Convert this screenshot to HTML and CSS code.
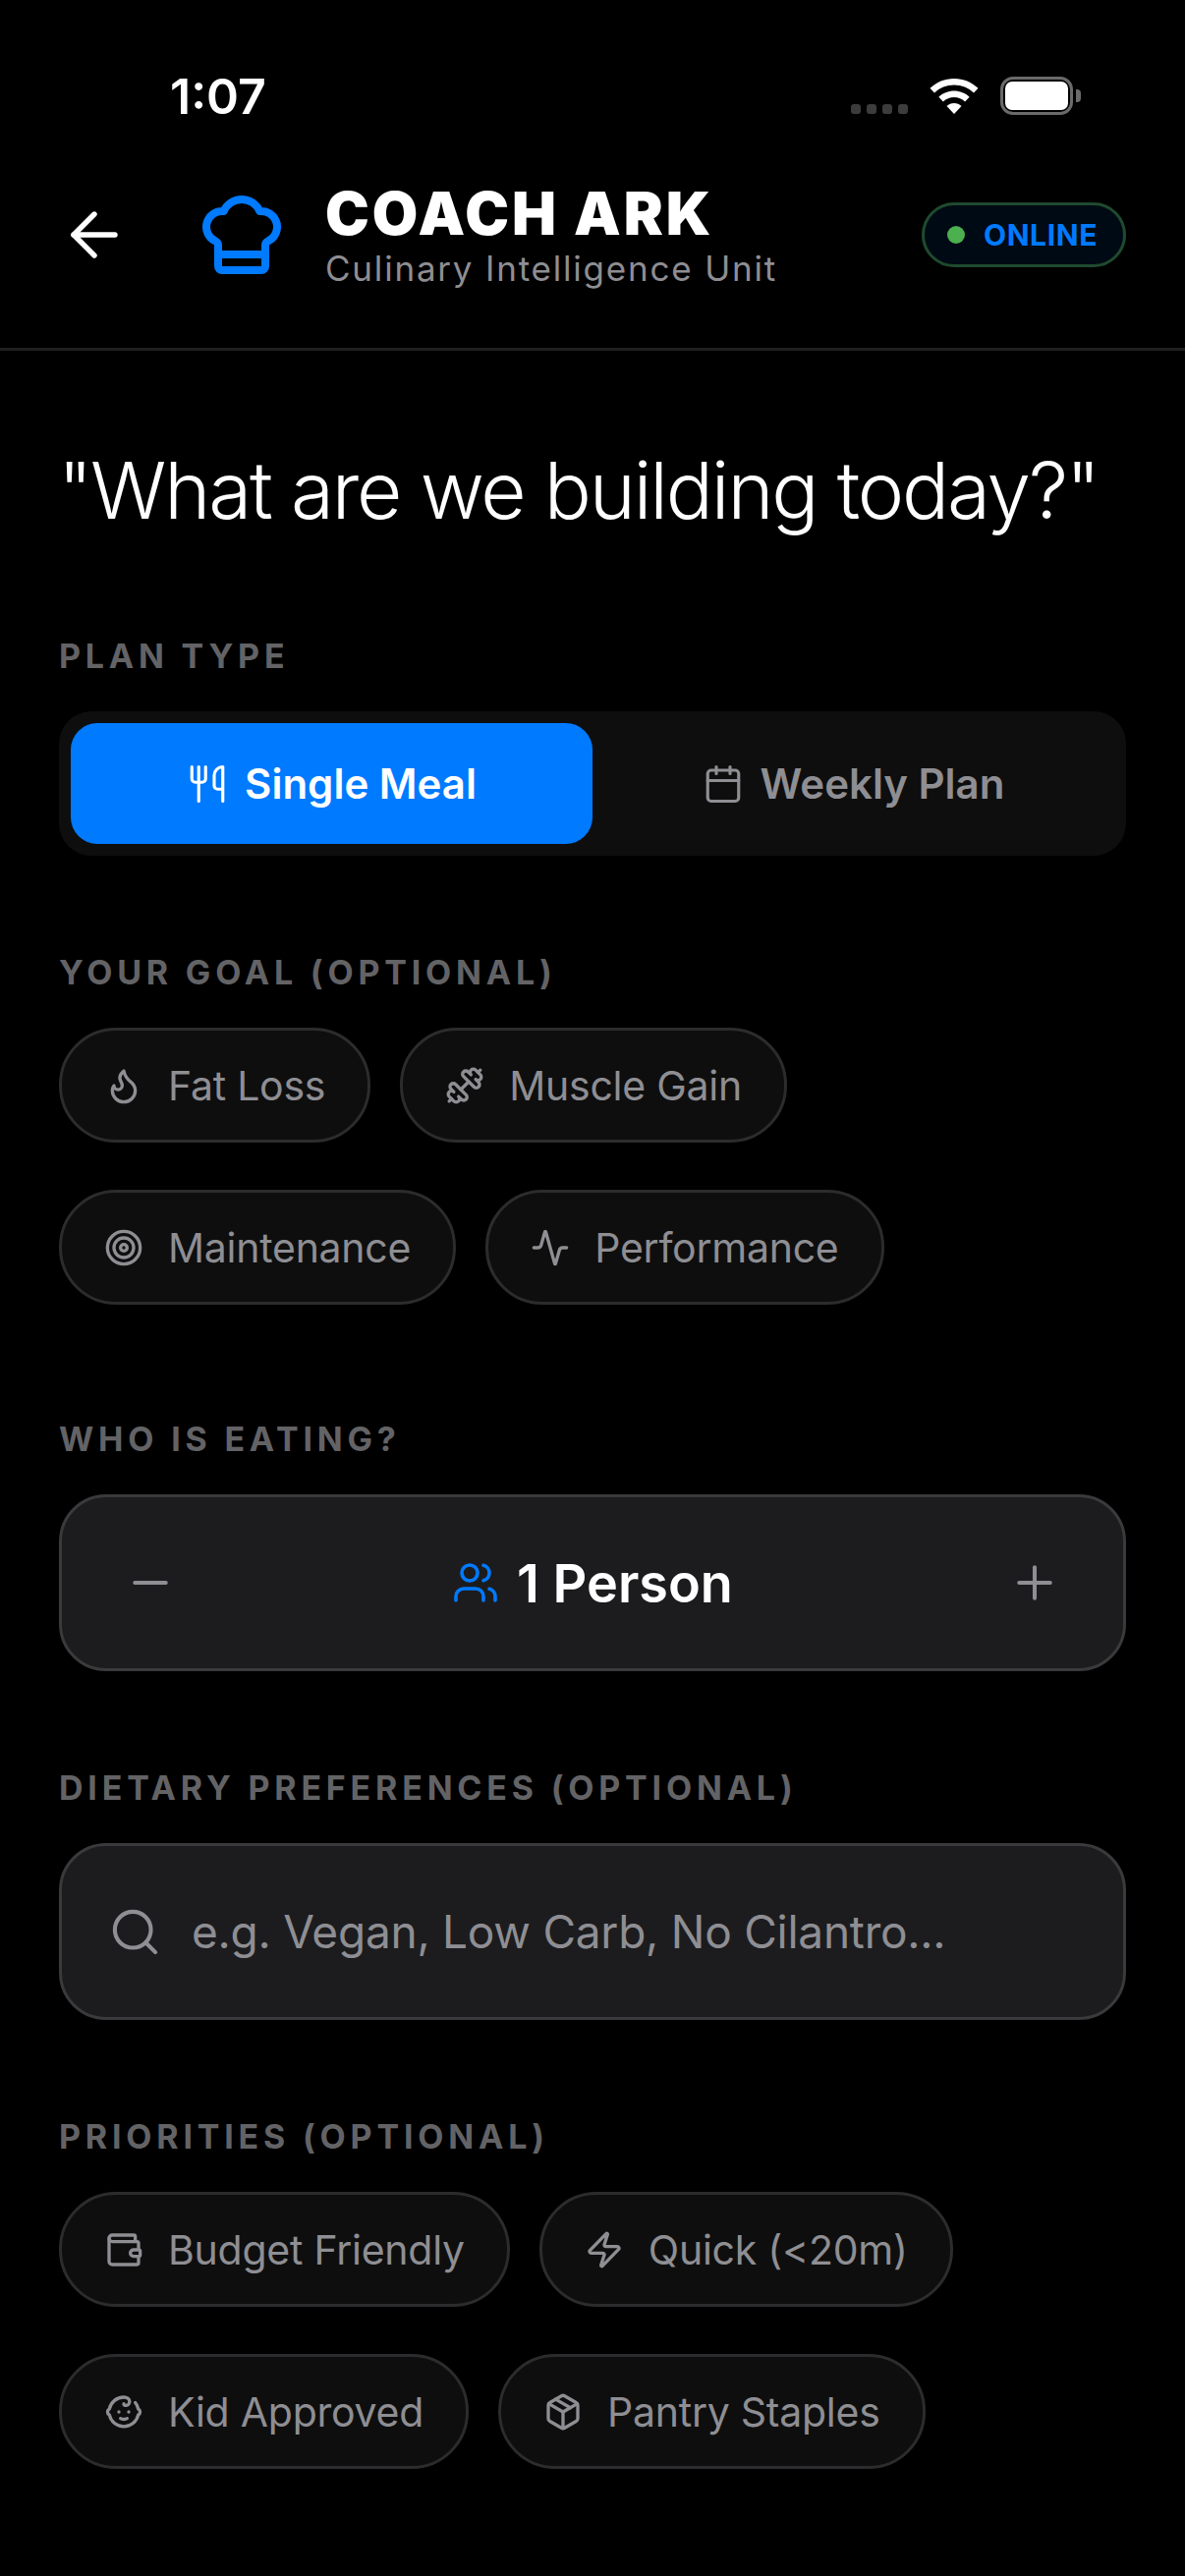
FILE: index.html
```html
<!DOCTYPE html>
<html lang="en">
<head>
    <meta charset="UTF-8">
    <meta name="viewport" content="width=device-width, initial-scale=1.0">
    <title>Coach Ark</title>
    <link rel="stylesheet" href="styles.css">
</head>
<body>
    <div class="status-bar">
        <span class="time">1:07</span>
        <div class="status-icons">
            <div class="signal"><i></i><i></i><i></i><i></i></div>
            <svg class="wifi" viewBox="0 0 50 36"><path d="M25 0C15.500 0 7 3.700 0.500 9.800L5 14.500C10.300 9.600 17.300 6.600 25 6.600s14.700 3 20 7.900l4.500-4.700C43 3.700 34.500 0 25 0z"/><path d="M25 12.500c-6 0-11.500 2.300-15.600 6.200l4.500 4.700c2.900-2.700 6.800-4.400 11.100-4.400s8.200 1.700 11.100 4.400l4.500-4.700c-4.100-3.900-9.600-6.200-15.600-6.200z"/><path d="M25 25c-2.900 0-5.500 1.100-7.500 2.900L25 36l7.500-8.100C30.500 26.100 27.900 25 25 25z"/></svg>
            <div class="battery"><div class="battery-fill"></div></div>
        </div>
    </div>

    <header class="top-bar">
        <svg class="back" viewBox="0 0 24 24"><path d="m12 19-7-7 7-7"/><path d="M19 12H5"/></svg>
        <svg class="hat" viewBox="0 0 24 24"><path d="M17 21a1 1 0 0 0 1-1v-5.350c0-.457.316-.844.727-1.041a4 4 0 0 0-2.134-7.589 5 5 0 0 0-9.186 0 4 4 0 0 0-2.134 7.588c.411.198.727.585.727 1.041V20a1 1 0 0 0 1 1Z"/><path d="M6 17h12"/></svg>
        <div class="brand">
            <h1>COACH ARK</h1>
            <p>Culinary Intelligence Unit</p>
        </div>
        <div class="online"><span class="dot"></span>ONLINE</div>
    </header>

    <main class="content">
        <h2 class="question">"What are we building today?"</h2>

        <section class="group">
            <div class="label">PLAN TYPE</div>
            <div class="tabs">
                <div class="tab active">
                    <svg class="tab-icon" viewBox="0 0 24 24"><path d="M3 2v7c0 1.100.9 2 2 2h4a2 2 0 0 0 2-2V2"/><path d="M7 2v20"/><path d="M21 15V2a5 5 0 0 0-5 5v6c0 1.100.9 2 2 2h3Zm0 0v7"/></svg>
                    Single Meal
                </div>
                <div class="tab">
                    <svg class="tab-icon" viewBox="0 0 24 24"><path d="M8 2v4"/><path d="M16 2v4"/><rect x="3" y="4" width="18" height="18" rx="2"/><path d="M3 10h18"/></svg>
                    Weekly Plan
                </div>
            </div>
        </section>

        <section class="group">
            <div class="label">YOUR GOAL (OPTIONAL)</div>
            <div class="chips">
                <div class="chip">
                    <svg viewBox="0 0 24 24"><path d="M8.500 14.500A2.500 2.500 0 0 0 11 12c0-1.380-.5-2-1-3-1.072-2.143-.224-4.054 2-6 .5 2.500 2 4.900 4 6.500 2 1.600 3 3.500 3 5.500a7 7 0 1 1-14 0c0-1.153.433-2.294 1-3a2.500 2.500 0 0 0 2.500 2.500z"/></svg>
                    Fat Loss
                </div>
                <div class="chip">
                    <svg class="flip" viewBox="0 0 24 24"><path d="M14.400 14.400 9.600 9.600"/><path d="M18.657 21.485a2 2 0 1 1-2.829-2.828l-1.767 1.768a2 2 0 1 1-2.829-2.829l6.364-6.364a2 2 0 1 1 2.829 2.829l-1.768 1.767a2 2 0 1 1 2.828 2.829z"/><path d="m21.500 21.500-1.400-1.400"/><path d="M3.900 3.900 2.500 2.500"/><path d="M6.404 12.768a2 2 0 1 1-2.829-2.829l1.768-1.767a2 2 0 1 1-2.828-2.829l2.828-2.828a2 2 0 1 1 2.829 2.828l1.767-1.768a2 2 0 1 1 2.829 2.829z"/></svg>
                    Muscle Gain
                </div>
                <div class="chip">
                    <svg viewBox="0 0 24 24"><circle cx="12" cy="12" r="10"/><circle cx="12" cy="12" r="6"/><circle cx="12" cy="12" r="2"/></svg>
                    Maintenance
                </div>
                <div class="chip">
                    <svg viewBox="0 0 24 24"><path d="M22 12h-2.480a2 2 0 0 0-1.930 1.460l-2.350 8.360a.25.25 0 0 1-.48 0L9.240 2.180a.25.25 0 0 0-.48 0l-2.350 8.360A2 2 0 0 1 4.490 12H2"/></svg>
                    Performance
                </div>
            </div>
        </section>

        <section class="group">
            <div class="label">WHO IS EATING?</div>
            <div class="stepper">
                <svg class="step-btn" viewBox="0 0 24 24"><path d="M5 12h14"/></svg>
                <div class="count">
                    <svg viewBox="0 0 24 24"><path d="M16 21v-2a4 4 0 0 0-4-4H6a4 4 0 0 0-4 4v2"/><circle cx="9" cy="7" r="4"/><path d="M22 21v-2a4 4 0 0 0-3-3.870"/><path d="M16 3.130a4 4 0 0 1 0 7.750"/></svg>
                    1 Person
                </div>
                <svg class="step-btn" viewBox="0 0 24 24"><path d="M5 12h14"/><path d="M12 5v14"/></svg>
            </div>
        </section>

        <section class="group">
            <div class="label">DIETARY PREFERENCES (OPTIONAL)</div>
            <div class="search">
                <svg viewBox="0 0 24 24"><circle cx="11" cy="11" r="8"/><path d="m21 21-4.300-4.300"/></svg>
                <span>e.g. Vegan, Low Carb, No Cilantro...</span>
            </div>
        </section>

        <section class="group">
            <div class="label">PRIORITIES (OPTIONAL)</div>
            <div class="chips">
                <div class="chip">
                    <svg viewBox="0 0 24 24"><path d="M19 7V4a1 1 0 0 0-1-1H5a2 2 0 0 0 0 4h15a1 1 0 0 1 1 1v4h-3a2 2 0 0 0 0 4h3a1 1 0 0 0 1-1v-2a1 1 0 0 0-1-1"/><path d="M3 5v14a2 2 0 0 0 2 2h15a1 1 0 0 0 1-1v-4"/></svg>
                    Budget Friendly
                </div>
                <div class="chip">
                    <svg viewBox="0 0 24 24"><path d="M4 14a1 1 0 0 1-.78-1.630l9.900-10.200a.5.5 0 0 1 .86.46l-1.920 6.020A1 1 0 0 0 13 10h7a1 1 0 0 1 .78 1.630l-9.900 10.200a.5.5 0 0 1-.86-.46l1.920-6.020A1 1 0 0 0 11 14z"/></svg>
                    Quick (&lt;20m)
                </div>
                <div class="chip">
                    <svg viewBox="0 0 24 24"><path d="M9 12h.01"/><path d="M15 12h.01"/><path d="M10 16c.5.3 1.200.5 2 .5s1.500-.2 2-.5"/><path d="M19 6.300a9 9 0 0 1 1.800 3.900 2 2 0 0 1 0 3.600 9 9 0 0 1-17.600 0 2 2 0 0 1 0-3.600A9 9 0 0 1 12 3c2 0 3.500 1.100 3.500 2.500s-.9 2.500-2 2.500c-.8 0-1.500-.4-1.500-1"/></svg>
                    Kid Approved
                </div>
                <div class="chip">
                    <svg viewBox="0 0 24 24"><path d="m7.500 4.270 9 5.150"/><path d="M21 8a2 2 0 0 0-1-1.730l-7-4a2 2 0 0 0-2 0l-7 4A2 2 0 0 0 3 8v8a2 2 0 0 0 1 1.730l7 4a2 2 0 0 0 2 0l7-4A2 2 0 0 0 21 16Z"/><path d="m3.300 7 8.700 5 8.700-5"/><path d="M12 22V12"/></svg>
                    Pantry Staples
                </div>
            </div>
        </section>
    </main>
</body>
</html>
```
FILE: styles.css
```css
* {
    margin: 0;
    padding: 0;
    box-sizing: border-box;
}

html, body {
    width: 1206px;
    height: 2622px;
    overflow: hidden;
}

body {
    background: #000;
    color: #fff;
    font-family: Inter, "Noto Sans", sans-serif;
}

svg {
    fill: none;
    stroke: currentColor;
    stroke-width: 2;
    stroke-linecap: round;
    stroke-linejoin: round;
    flex-shrink: 0;
}

/* status bar */
.status-bar {
    height: 143px;
    padding: 71px 114px 0 173px;
    display: flex;
    justify-content: space-between;
    align-items: flex-start;
}

.time {
    font-size: 50px;
    font-weight: 600;
    line-height: 54px;
}

.status-icons {
    display: flex;
    align-items: flex-end;
    gap: 22px;
    height: 40px;
    margin-top: 6px;
}

.signal {
    display: flex;
    gap: 6px;
    margin-bottom: 1px;
}

.signal i {
    width: 10px;
    height: 10px;
    border-radius: 3px;
    background: #3c3c3c;
}

.wifi {
    width: 50px;
    height: 36px;
    fill: #fff;
    stroke: none;
    margin-bottom: 1px;
}

.battery {
    position: relative;
    width: 74px;
    height: 39px;
    padding: 2px;
    border: 3px solid #6a6a6a;
    border-radius: 13px;
}

.battery::after {
    content: '';
    position: absolute;
    right: -11px;
    top: 10px;
    width: 5px;
    height: 13px;
    background: #6a6a6a;
    border-radius: 0 4px 4px 0;
}

.battery-fill {
    width: 100%;
    height: 100%;
    background: #fff;
    border-radius: 7px;
}

/* header */
.top-bar {
    height: 214px;
    padding: 0 60px 19px 60px;
    display: flex;
    align-items: center;
    border-bottom: 3px solid #1f1f1f;
}

.back {
    width: 72px;
    height: 72px;
    margin-right: 66px;
    stroke-width: 1.8;
}

.hat {
    width: 96px;
    height: 96px;
    color: #007aff;
    margin-right: 37px;
}

.brand {
    flex: 1;
    margin-top: 2px;
}

.brand h1 {
    font-size: 60px;
    font-weight: 900;
    letter-spacing: 3px;
    line-height: 66px;
}

.brand p {
    font-size: 35px;
    color: #8e8e93;
    letter-spacing: 1.8px;
    line-height: 46px;
}

.online {
    display: flex;
    align-items: center;
    gap: 19px;
    height: 66px;
    padding: 0 26px 0 23px;
    border: 3px solid #1f4a2f;
    border-radius: 33px;
    background: #000a14;
    color: #007aff;
    font-size: 30px;
    font-weight: 700;
    letter-spacing: 0.6px;
}

.dot {
    width: 18px;
    height: 18px;
    border-radius: 50%;
    background: #4caf50;
}

/* main */
.content {
    padding: 0 60px;
}

.question {
    font-size: 80px;
    font-weight: 300;
    letter-spacing: -2.15px;
    line-height: 100px;
    margin-top: 92px;
    margin-bottom: 99px;
    margin-left: -1px;
    white-space: nowrap;
}

.group {
    margin-bottom: 99px;
}

.label {
    font-size: 34px;
    font-weight: 700;
    letter-spacing: 4.8px;
    color: #636366;
    line-height: 40px;
    margin-bottom: 36px;
}

.tabs {
    display: flex;
    height: 147px;
    padding: 12px;
    background: #0e0e0e;
    border-radius: 33px;
}

.tab {
    flex: 1;
    display: flex;
    align-items: center;
    justify-content: center;
    gap: 17px;
    border-radius: 27px;
    font-size: 42px;
    font-weight: 600;
    color: #8e8e93;
}

.tab.active {
    background: #007aff;
    color: #fff;
}

.tab-icon {
    width: 42px;
    height: 42px;
    stroke-width: 1.8;
}

.chips {
    display: flex;
    flex-wrap: wrap;
    gap: 48px 30px;
    padding-bottom: 18px;
}

.chip {
    display: flex;
    align-items: center;
    gap: 25px;
    height: 117px;
    padding: 0 43px;
    background: #0e0e0e;
    border: 3px solid #2c2c2e;
    border-radius: 58px;
    color: #8e8e93;
    font-size: 41px;
    letter-spacing: -0.25px;
}

.chip svg {
    width: 40px;
    height: 40px;
}

.flip {
    transform: scaleX(-1);
}

.stepper {
    height: 180px;
    padding: 0 63px;
    display: flex;
    align-items: center;
    justify-content: space-between;
    background: #1c1c1e;
    border: 3px solid #3a3a3c;
    border-radius: 48px;
}

.step-btn {
    width: 54px;
    height: 54px;
    color: #8e8e93;
    stroke-width: 1.8;
}

.count {
    display: flex;
    align-items: center;
    gap: 18px;
    font-size: 54px;
    font-weight: 600;
}

.count svg {
    width: 48px;
    height: 48px;
    color: #007aff;
    stroke-width: 1.8;
}

.search {
    height: 180px;
    padding: 0 47px;
    display: flex;
    align-items: center;
    gap: 30px;
    background: #1c1c1e;
    border: 3px solid #3a3a3c;
    border-radius: 48px;
    color: #8e8e93;
    font-size: 46px;
    letter-spacing: -0.25px;
}

.search svg {
    width: 55px;
    height: 55px;
    stroke-width: 1.8;
}
```
